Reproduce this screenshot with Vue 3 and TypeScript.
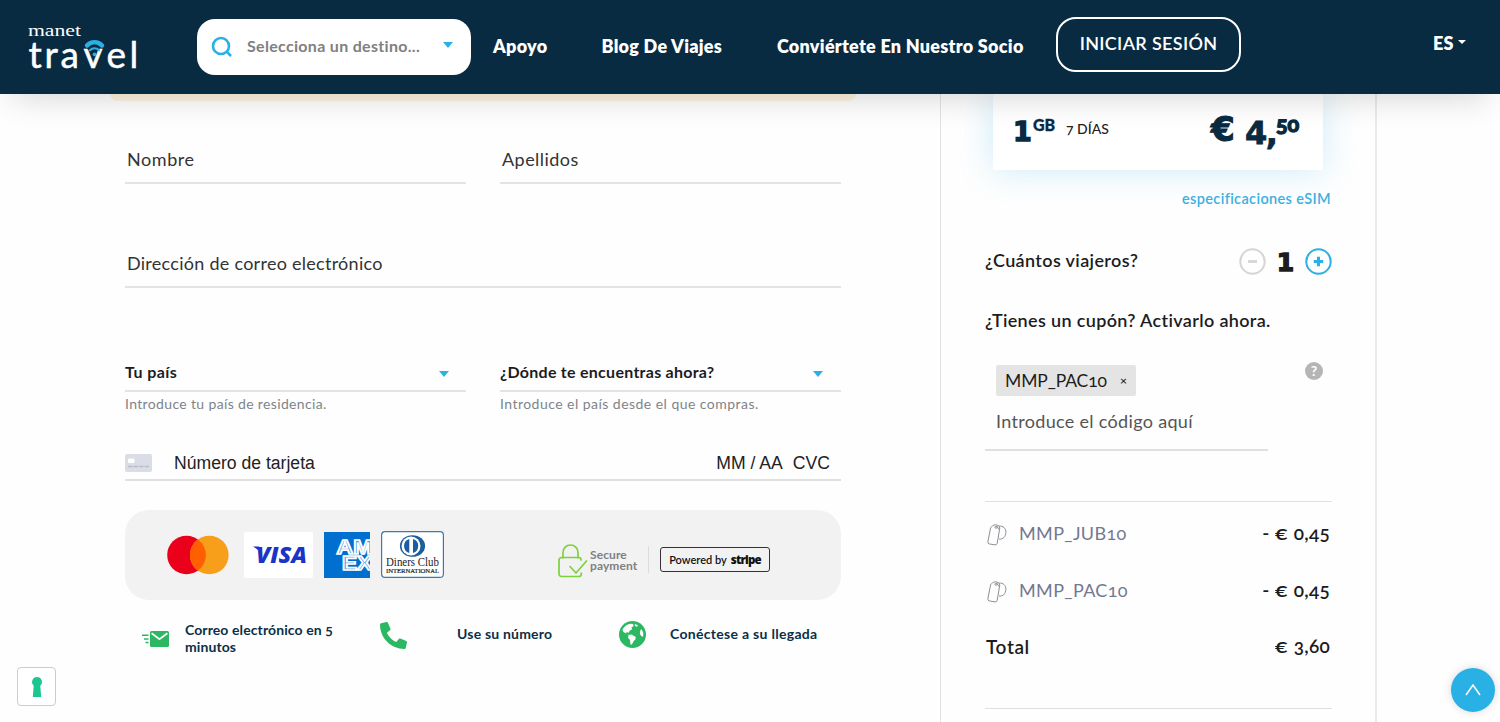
<script setup lang="ts">
import { ref } from 'vue'

interface NavLink { label: string; cls: string }
interface Coupon { code: string; amount: string }

const links: NavLink[] = [
  { label: 'Apoyo', cls: 'n1' },
  { label: 'Blog De Viajes', cls: 'n2' },
  { label: 'Conviértete En Nuestro Socio', cls: 'n3' },
]
const coupons: Coupon[] = [
  { code: 'MMP_JUB10', amount: '0,45' },
  { code: 'MMP_PAC10', amount: '0,45' },
]
const travellers = ref(1)
</script>

<template>
  <div class="page">
    <header class="topbar">
      <svg class="logo" width="120" height="60" viewBox="20 16 120 60">
        <text class="logo-small" x="28" y="35.500" textLength="53" lengthAdjust="spacingAndGlyphs">manet</text>
        <text class="logo-big" x="28.500 44.500 60.500 83.500 106.500 129.500" y="68">travel</text>
        <g fill="none" stroke="#29b1e6" stroke-linecap="round">
          <path d="M87 45.500a10 10 0 0 1 15 0" stroke-width="4.400" />
          <path d="M90 50.200a6.200 6.200 0 0 1 9 0" stroke-width="2.200" />
        </g>
        <circle cx="94.500" cy="54.300" r="1.900" fill="#29b1e6" />
      </svg>
      <div class="search">
        <svg width="22" height="22" viewBox="0 0 22 22" fill="none" stroke="#29b1e6" stroke-width="2.600">
          <circle cx="10" cy="10" r="8" /><path d="M15 15l5 5" />
        </svg>
        <span class="search-text">Selecciona un destino...</span>
        <svg width="10" height="6" viewBox="0 0 10 6"><path d="M0 0h10L5 6z" fill="#29b1e6" /></svg>
      </div>
      <nav class="nav">
        <a v-for="l in links" :key="l.label" :class="l.cls">{{ l.label }}</a>
      </nav>
      <button class="login">INICIAR SESIÓN</button>
      <div class="lang">
        <span>ES</span>
        <svg width="8" height="4" viewBox="0 0 8 4"><path d="M0 0h8L4 4z" fill="#fff" /></svg>
      </div>
    </header>

    <div class="content">
      <main class="form">
        <div class="notice"></div>
        <div class="row names">
          <div class="field"><span class="t-nombre">Nombre</span></div>
          <div class="field"><span class="t-apellidos">Apellidos</span></div>
        </div>
        <div class="field email"><span class="t-email">Dirección de correo electrónico</span></div>
        <div class="row countries">
          <div class="pick">
            <div class="select">
              <span class="t-pais">Tu país</span>
              <svg width="10" height="6" viewBox="0 0 10 6"><path d="M0 0h10L5 6z" fill="#29b1e6" /></svg>
            </div>
            <div class="hint h1">Introduce tu país de residencia.</div>
          </div>
          <div class="pick">
            <div class="select second">
              <span class="t-donde">¿Dónde te encuentras ahora?</span>
              <svg width="10" height="6" viewBox="0 0 10 6"><path d="M0 0h10L5 6z" fill="#29b1e6" /></svg>
            </div>
            <div class="hint h2">Introduce el país desde el que compras.</div>
          </div>
        </div>
        <div class="card-row">
          <svg width="27" height="18" viewBox="0 0 27 18">
            <rect width="27" height="18" rx="2" fill="#dadce6" />
            <rect x="3" y="4.500" width="6.500" height="4.500" rx="1" fill="#fff" />
            <path d="M3 12.600h21" stroke="#b9bccb" stroke-width="1.500" stroke-dasharray="4.500 1" />
          </svg>
          <span class="number">Número de tarjeta</span>
          <span class="exp">MM / AA</span>
          <span class="cvc">CVC</span>
        </div>

        <section class="payments">
          <svg class="mc" width="62" height="40" viewBox="0 0 62 40">
            <circle cx="19.500" cy="20" r="19.300" fill="#eb001b" />
            <circle cx="42.300" cy="20" r="19.300" fill="#f79e1b" />
            <path d="M30.900 4.400a19.300 19.300 0 0 1 0 31.200a19.300 19.300 0 0 1 0-31.200z" fill="#ff5f00" />
          </svg>
          <svg class="visa" width="69" height="46" viewBox="0 0 69 46">
            <rect width="69" height="46" rx="2" fill="#fff" />
            <path d="M9 14.400h6l1 2.600l-2 1z" fill="#1a34c8" />
            <text x="12" y="30.600" textLength="51" lengthAdjust="spacingAndGlyphs" class="visa-text">VISA</text>
          </svg>
          <svg class="amex" width="46" height="46" viewBox="0 0 46 46">
            <rect width="46" height="46" fill="#006fcf" />
            <text x="12.500" y="21.800" textLength="36" lengthAdjust="spacingAndGlyphs">AM</text>
            <text x="18" y="38" textLength="30" lengthAdjust="spacingAndGlyphs">EX</text>
          </svg>
          <svg class="diners" width="63" height="47" viewBox="0 0 63 47">
            <rect x=".6" y=".6" width="61.800" height="45.800" rx="3.500" fill="#fff" stroke="#3f78ab" stroke-width="1.200" />
            <ellipse cx="31.500" cy="15" rx="12.600" ry="10.800" fill="#1b5f9e" />
            <circle cx="30" cy="15" r="9.500" fill="#fff" />
            <path d="M28.300 8v14a7.300 7.300 0 0 1 0-14zM32 8v14a7.300 7.300 0 0 0 0-14z" fill="#1b5f9e" />
            <text x="5" y="35" font-size="12" textLength="53" lengthAdjust="spacingAndGlyphs">Diners Club</text>
            <text x="5" y="42" font-size="6.500" textLength="53" lengthAdjust="spacingAndGlyphs" class="intl">INTERNATIONAL</text>
          </svg>
          <svg class="lock" width="30" height="34" viewBox="0 0 30 34" fill="none" stroke="#7ed13b" stroke-width="1.700" stroke-linecap="round" stroke-linejoin="round">
            <path d="M5 14V8.500a7.500 7.500 0 0 1 15 0V14M23 16v-.5a2 2 0 0 0-2-2H3.500a2.500 2.500 0 0 0-2.500 2.500v14a2.500 2.500 0 0 0 2.500 2.500H21a2.300 2.300 0 0 0 2.300-2.300V29M12 22.500l6 6.500l10.500-12" />
          </svg>
          <div class="secure">Secure<br />payment</div>
          <i class="divider"></i>
          <div class="stripe"><span>Powered by</span><b>stripe</b></div>
        </section>

        <section class="features">
          <svg class="f-mail" width="27" height="16" viewBox="0 0 27 16">
            <rect x="8" width="19" height="16" rx="1.600" fill="#2cb862" />
            <path d="M9.600 2.300l7.900 5.800l7.900-5.800" fill="none" stroke="#fff" stroke-width="1.700" />
            <path d="M0 4.300h6.500M2 7.900h4.500M3.500 11.500h3" stroke="#2cb862" stroke-width="1.500" />
          </svg>
          <span class="f-text ft1">Correo electrónico en 5<br />minutos</span>
          <svg class="f-phone" width="27" height="27" viewBox="0 0 512 512">
            <path fill="#2cb862" transform="matrix(-1 0 0 1 512 0)" d="M493.400 24.600l-104-24c-11.300-2.600-22.900 3.300-27.500 13.900l-48 112c-4.200 9.800-1.400 21.300 6.900 28l60.600 49.600c-36 76.700-98.900 140.500-177.200 177.200l-49.600-60.600c-6.800-8.300-18.200-11.100-28-6.900l-112 48C3.900 366.500-2 378.100.6 389.400l24 104C27.100 504.200 36.700 512 48 512c256.100 0 464-207.500 464-464 0-11.200-7.700-20.900-18.600-23.400z" />
          </svg>
          <span class="f-text ft2">Use su número</span>
          <svg class="f-globe" width="27" height="27" viewBox="0 0 27 27">
            <circle cx="13.500" cy="13.500" r="13.500" fill="#2cb862" />
            <path fill="#fff" d="M3.400 8.700C5 5.200 8.400 3 12 2.700l2.200.5l.3 2l-2.200 1.300l1 1.700l-2.800 1.600l-.6 1.900l-2.300-.6l-.4 1.500l2 1.300l3.300-.3l4.300 2.500l-.5 2.500l-1.700 1.600l-1.700 3.400h-1.400l-.5-4.700l-1.900-2.200l.4-2.600l-2.600-1.800l-2.500-1.400zM15.900 3.100l3 1.100l-.8 1.600l-2.200-.9zM22.700 8.200l1.600 3.900l-.2 3.600l-2-.7l-1.200-2.600l.4-3.100z" />
          </svg>
          <span class="f-text ft3">Conéctese a su llegada</span>
        </section>
      </main>

      <aside class="summary">
        <div class="plan">
          <span class="qty">1</span><span class="unit">GB</span>
          <span class="days">7 DÍAS</span>
          <span class="euro">€</span><span class="int">4,</span><span class="cents">50</span>
        </div>
        <a class="specs">especificaciones eSIM</a>
        <div class="travellers">
          <span class="t-cuantos">¿Cuántos viajeros?</span>
          <div class="stepper">
            <svg width="27" height="27" viewBox="0 0 27 27" fill="none" stroke="#d5d5d5">
              <circle cx="13.500" cy="13.500" r="12.200" stroke-width="2" /><path d="M9 13.500h9" stroke-width="2.800" />
            </svg>
            <b>{{ travellers }}</b>
            <svg width="27" height="27" viewBox="0 0 27 27" fill="none" stroke="#29b1e6">
              <circle cx="13.500" cy="13.500" r="12.200" stroke-width="2" /><path d="M8.800 13.500h9.400M13.500 8.800v9.400" stroke-width="3" />
            </svg>
          </div>
        </div>
        <div class="coupon-title">¿Tienes un cupón? Activarlo ahora.</div>
        <div class="coupon">
          <div class="coupon-input">
            <div class="chip"><span>MMP_PAC10</span><i>×</i></div>
            <div class="placeholder">Introduce el código aquí</div>
          </div>
          <div class="help">?</div>
        </div>
        <div class="totals">
          <div v-for="c in coupons" :key="c.code" class="line">
            <svg width="20" height="22" viewBox="0 0 20 22" fill="none" stroke="#8b8f96" stroke-width="1">
              <path d="M5.800 1.500Q8.500-.2 11.700 1.700L12.800 4L10.200 19.300Q9.800 21.200 8 20.900L2.200 19.900Q.5 19.500.9 17.600L3.600 3.800z" />
              <path d="M12 2.200C16 1.500 19.200 4.500 18.900 8.500C18.600 13 16 15.500 12 15M9.500 1.800L12 5.500" />
              <circle cx="9" cy="3.300" r="1" />
            </svg>
            <span class="code">{{ c.code }}</span>
            <b>- <span class="sign">€</span> {{ c.amount }}</b>
          </div>
          <div class="line total"><span class="t-total">Total</span><b><span class="sign">€</span> 3,60</b></div>
        </div>
      </aside>
    </div>

    <div class="privacy">
      <svg width="10" height="20" viewBox="0 0 10 20"><path d="M5 0a5 5 0 0 1 3.300 8.700L9.200 20H.8L1.700 8.700A5 5 0 0 1 5 0z" fill="#1cc691" /></svg>
    </div>
    <div class="to-top">
      <svg width="16" height="12" viewBox="0 0 16 12" fill="none" stroke="#fff" stroke-width="1.500"><path d="M1 11L8 1l7 10" /></svg>
    </div>
  </div>
</template>

<style>
html, body { margin: 0; overflow: hidden; background: #fff; }
</style>

<style scoped>
.page {
  position: relative;
  width: 1500px;
  height: 722px;
  overflow: hidden;
  background: #fefefe;
  color: #1c1c1e;
  font-family: Lato, "Open Sans", sans-serif;
  font-feature-settings: "onum";
  white-space: nowrap;
}
svg { display: block; flex: none; }
.topbar {
  position: relative;
  z-index: 2;
  display: flex;
  height: 94px;
  box-sizing: border-box;
  padding-left: 20px;
  background: #082b42;
  box-shadow: 0 16px 32px -12px rgba(0, 0, 0, .16);
}
.logo { margin-top: 16px; }
.logo-small { font-family: "Liberation Serif", serif; font-size: 16px; fill: #fff; }
.logo-big { font-size: 37px; fill: #fff; stroke: #fff; stroke-width: .5px; }
.search {
  display: flex;
  align-items: center;
  box-sizing: border-box;
  width: 274px;
  height: 56px;
  margin: 19px 0 0 57px;
  padding: 0 18px 0 14px;
  border-radius: 18px;
  background: #fff;
}
.search-text { flex: 1; margin: -3px 0 0 14px; font-size: 16px; font-weight: 700; letter-spacing: .31px; color: #808080; }
.search svg:last-child { margin-top: -4px; }
.nav { display: flex; margin-left: 22px; line-height: 93px; color: #fff; font-size: 18px; font-weight: 800; letter-spacing: .26px; }
.nav a { display: block; }
.n1 { width: 108.500px; }
.n2 { width: 175.500px; }
.n3 { width: 279px; }
.login {
  box-sizing: border-box;
  width: 185px;
  height: 55px;
  margin-top: 17px;
  padding: 0 0 3px;
  border: 2px solid #fff;
  border-radius: 20px;
  background: none;
  color: #fff;
  font: 600 18px Lato, sans-serif;
  letter-spacing: .33px;
}
.lang { display: flex; align-items: center; height: 86px; margin-left: 192px; gap: 4px; color: #fff; font-size: 18px; font-weight: 800; letter-spacing: .3px; }
.lang svg { margin-top: -2px; }

.content { display: flex; height: 628px; }
.form { width: 716px; margin-left: 125px; }
.notice { width: 746px; height: 7px; margin-left: -15px; border-radius: 0 0 8px 8px; background: #fff3df; }
.row { display: flex; justify-content: space-between; }
.names { margin-top: 35px; }
.field { box-sizing: border-box; width: 341px; height: 48px; padding-left: 2px; border-bottom: 2px solid #e3e3e3; line-height: 46px; font-size: 18px; color: #333; }
.t-nombre { letter-spacing: .55px; }
.t-apellidos { letter-spacing: .45px; }
.t-email { letter-spacing: .27px; }
.email { width: 100%; margin-top: 56px; }
.countries { margin-top: 66px; }
.pick { width: 341px; }
.select { display: flex; align-items: center; justify-content: space-between; box-sizing: border-box; height: 38px; padding-right: 17px; border-bottom: 2px solid #e3e3e3; font-size: 16px; font-weight: 700; }
.second { padding-right: 18px; }
.select span { margin-top: -2px; }
.t-pais { letter-spacing: .42px; }
.t-donde { letter-spacing: .27px; }
.select svg { margin-top: 3px; }
.hint { height: 24px; line-height: 24px; font-size: 14px; color: #808488; }
.h1 { letter-spacing: .35px; }
.h2 { letter-spacing: .46px; }
.card-row { display: flex; align-items: center; box-sizing: border-box; height: 36px; margin-top: 29px; padding-top: 2px; border-bottom: 2px solid #e0e0e0; font: 17.600px "Liberation Sans", Arial, sans-serif; color: #222; }
.number { flex: 1; margin-left: 22px; }
.exp { margin-right: 10px; }
.cvc { margin-right: 11px; }

.payments { display: flex; align-items: center; box-sizing: border-box; height: 90px; margin-top: 29px; padding-bottom: 1px; border-radius: 24px; background: #f2f2f2; }
.mc { margin-left: 42px; }
.visa { margin-left: 15px; }
.visa-text { font: italic 900 22px "Open Sans", sans-serif; fill: #1a34c8; }
.amex { margin-left: 11px; }
.amex text { font: 900 20px "Liberation Sans", sans-serif; fill: #4c9adf; stroke: #fff; stroke-width: 1.700px; }
.diners { margin-left: 11px; }
.diners text { font-family: "Liberation Serif", serif; fill: #222; }
.diners .intl { stroke: #222; stroke-width: .2px; }
.lock { margin: 12px 0 0 114px; }
.secure { width: 58px; margin: 10px 0 0 2px; line-height: 11px; font-size: 12px; font-weight: 700; letter-spacing: .1px; color: #808080; }
.divider { width: 1px; height: 27px; margin: 10px 11px 0 0; background: #dcdcdc; }
.stripe { display: flex; align-items: center; justify-content: center; gap: 4px; box-sizing: border-box; width: 110px; height: 25px; margin-top: 10px; border: 1.500px solid #333; border-radius: 3px; color: #111; font-size: 11px; font-weight: 600; }
.stripe b { font: 800 11.500px "Open Sans", sans-serif; letter-spacing: -.8px; }

.features { display: flex; align-items: flex-start; height: 80px; color: #0b2f47; font-size: 14px; font-weight: 700; line-height: 17px; }
.f-mail { margin: 31px 0 0 17px; }
.ft1 { width: 195px; margin: 21px 0 0 16px; letter-spacing: .1px; }
.f-phone { margin-top: 22px; }
.ft2 { width: 162px; margin: 25px 0 0 50px; letter-spacing: .2px; }
.f-globe { margin-top: 21px; }
.ft3 { margin: 25px 0 0 24px; letter-spacing: .3px; }

.summary { box-sizing: border-box; width: 437px; margin-left: 99px; padding: 0 43px 0 44px; border: 1px solid #e3e3e3; border-width: 0 2px 0 1px; border-right-color: #ebebeb; }
.plan { display: flex; box-sizing: border-box; width: 330px; height: 76px; margin-left: 8px; padding: 0 22px 0 20px; background: #fff; box-shadow: 0 0 34px rgba(41, 177, 230, .24); color: #082b42; }
.qty { width: 20px; font: 700 27px/76px "DejaVu Sans", sans-serif; -webkit-text-stroke: 1.400px #082b42; }
.unit { width: 33px; font-size: 16px; font-weight: 900; line-height: 62px; -webkit-text-stroke: .3px #082b42; }
.days { flex: 1; line-height: 70px; color: #222; font-size: 14px; font-weight: 500; }
.euro { width: 34px; font: 700 34px/71px "DejaVu Sans", sans-serif; -webkit-text-stroke: 1.200px #082b42; }
.int { width: 31px; font: 700 32px/78px "DejaVu Sans", sans-serif; letter-spacing: -1.500px; -webkit-text-stroke: .8px #082b42; }
.cents { width: 25px; font-size: 21.500px; font-weight: 700; line-height: 60px; -webkit-text-stroke: 1.400px #082b42; }
.specs { display: block; margin: 17px 1px 0 0; line-height: 24px; text-align: right; color: #3bb0e0; font-size: 14.500px; font-weight: 600; letter-spacing: .37px; }
.travellers { display: flex; justify-content: space-between; align-items: center; height: 28px; margin-top: 36px; font-size: 18px; font-weight: 600; }
.t-cuantos { margin-top: -2px; letter-spacing: .37px; }
.stepper { display: flex; align-items: center; }
.stepper b { width: 39px; margin-top: 4px; text-align: center; font: 700 25px/28px "DejaVu Sans", sans-serif; -webkit-text-stroke: 1.400px #1c1c1e; }
.coupon-title { height: 28px; margin-top: 31px; line-height: 28px; font-size: 18px; font-weight: 600; letter-spacing: .35px; }
.coupon { display: flex; justify-content: space-between; margin-top: 31px; padding-right: 9px; }
.coupon-input { box-sizing: border-box; width: 283px; height: 86px; padding-left: 11px; border-bottom: 2px solid #e0e0e0; font-size: 18px; }
.chip { display: flex; align-items: center; box-sizing: border-box; width: 140px; height: 31px; padding: 0 9px; border-radius: 2px; background: #e4e4e4; }
.chip span { flex: 1; margin-top: -1px; font-size: 17.500px; letter-spacing: -.1px; }
.chip i { font: 600 12px Lato, sans-serif; }
.placeholder { margin-top: 12px; line-height: 26px; color: #555; letter-spacing: .32px; }
.help { width: 18px; height: 18px; margin-top: -3px; border-radius: 50%; background: #b5b5b5; color: #fff; text-align: center; font: 700 14px/18px Lato, sans-serif; }
.totals { height: 206px; margin-top: 50px; border: 1px solid #e0e0e0; border-width: 1px 0; }
.line { display: flex; align-items: center; height: 57px; padding: 0 2px; font-size: 18px; }
.line:first-child { margin-top: 4px; }
.line b { margin-top: -4px; font-size: 19px; font-weight: 600; letter-spacing: .3px; }
.sign { display: inline-block; width: 14px; transform: scaleX(1.22); transform-origin: left; }
.code { flex: 1; margin: -3px 0 0 12px; letter-spacing: .35px; color: #737890; }
.total { height: 55px; padding-left: 1px; justify-content: space-between; }
.t-total { margin-top: -3px; font-size: 19px; font-weight: 600; letter-spacing: .6px; }

.privacy { position: absolute; left: 17px; top: 667px; z-index: 3; display: flex; align-items: center; justify-content: center; box-sizing: border-box; width: 39px; height: 39px; border: 1px solid #ccc; border-radius: 4px; background: #fff; }
.to-top { position: absolute; left: 1451px; top: 668px; z-index: 3; display: flex; align-items: center; justify-content: center; width: 44px; height: 44px; border-radius: 50%; background: #29b1e6; box-shadow: 0 0 8px rgba(0, 0, 0, .15); }
</style>
